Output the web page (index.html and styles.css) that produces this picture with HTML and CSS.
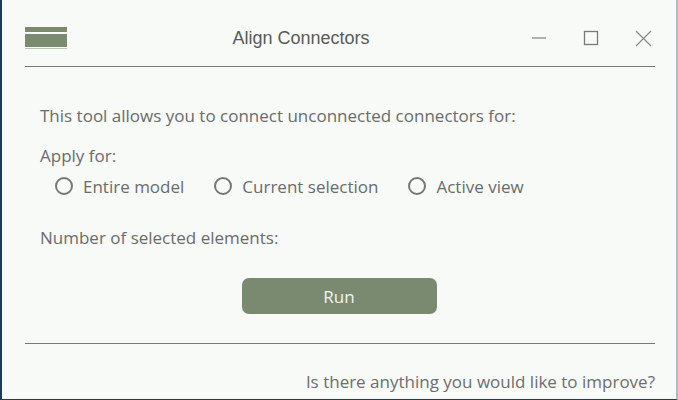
FILE: index.html
```html
<!DOCTYPE html>
<html>
<head>
<meta charset="utf-8">
<link rel="stylesheet" href="styles.css">
</head>
<body>
<div class="window">
  <div class="titlebar">
    <div class="menu-icon"><span class="b1"></span><span class="b2"></span><span class="b3"></span></div>
    <div class="title">Align Connectors</div>
    <div class="controls">
      <svg width="16" height="16" viewBox="0 0 16 16"><line x1="1" y1="8" x2="15" y2="8" stroke="#8a8a8a" stroke-width="1.3"/></svg>
      <svg width="16" height="16" viewBox="0 0 16 16"><rect x="1.5" y="1.5" width="13" height="13" fill="none" stroke="#7a7a7a" stroke-width="1.3"/></svg>
      <svg width="17" height="17" viewBox="0 0 17 17"><path d="M1 1 L16 16 M16 1 L1 16" stroke="#8a8a8a" stroke-width="1.2"/></svg>
    </div>
  </div>
  <div class="rule"></div>
  <div class="content">
    <p class="intro">This tool allows you to connect unconnected connectors for:</p>
    <p class="label">Apply for:</p>
    <div class="radios">
      <label class="radio"><span class="circle"></span>Entire model</label>
      <label class="radio"><span class="circle"></span>Current selection</label>
      <label class="radio"><span class="circle"></span>Active view</label>
    </div>
    <p class="count">Number of selected elements:</p>
    <div class="actions"><button class="run">Run</button></div>
  </div>
  <div class="rule"></div>
  <div class="footer">Is there anything you would like to improve?</div>
</div>
</body>
</html>
```
FILE: styles.css
```css
html, body {
  margin: 0;
  padding: 0;
}
body {
  width: 678px;
  height: 400px;
  overflow: hidden;
  background: #f7faf7;
}
.window {
  box-sizing: border-box;
  width: 678px;
  height: 400px;
  border-left: 2px solid #1f3b5c;
  border-right: 2px solid #a9bccd;
  border-bottom: 1px solid #2b3a44;
  background: #f7faf7;
  display: flex;
  flex-direction: column;
  padding: 0 21px 0 23px;
  font-family: "Open Sans", "Noto Sans", sans-serif;
  color: #6b6b6b;
}
.titlebar {
  height: 66px;
  box-sizing: border-box;
  padding-top: 10px;
  display: flex;
  align-items: center;
}
.menu-icon {
  width: 42px;
  display: flex;
  flex-direction: column;
}
.menu-icon .b1 { height: 5px; background: #7b8b70; }
.menu-icon .b2 { height: 13px; background: #7b8b70; margin-top: 2px; }
.menu-icon .b3 { height: 1px; background: #b9c4b2; margin-top: 1px; }
.title {
  flex: 1;
  text-align: center;
  font-family: "Liberation Sans", Arial, sans-serif;
  font-size: 18px;
  color: #5a5a5a;
  padding-left: 4px;
}
.controls {
  display: flex;
  align-items: center;
  gap: 36px;
  margin-right: 3px;
}
.rule {
  height: 1px;
  background: #7a7a7a;
}
.content {
  flex: 1;
  padding: 38px 0 0 15px;
  font-size: 17px;
  display: flex;
  flex-direction: column;
}
.content p {
  margin: 0;
  line-height: 22px;
}
.label {
  margin-top: 18px !important;
}
.radios {
  display: flex;
  margin-top: 8px;
  padding-left: 15px;
  height: 22px;
  align-items: center;
}
.radio {
  display: flex;
  align-items: center;
  margin-right: 30px;
}
.radio:nth-child(2) { margin-right: 30px; }
.circle {
  box-sizing: border-box;
  width: 18px;
  height: 18px;
  border: 2px solid #777;
  border-radius: 50%;
  margin-right: 10px;
}
.count {
  margin-top: 30px !important;
}
.actions {
  display: flex;
  justify-content: center;
  margin-top: 29px;
  padding-right: 17px;
}
.run {
  width: 195px;
  height: 36px;
  border: none;
  border-radius: 7px;
  background: #7a8a71;
  color: #f2f5f0;
  font-family: "Open Sans", "Noto Sans", sans-serif;
  font-size: 17px;
}
.footer {
  height: 55px;
  display: flex;
  align-items: flex-end;
  justify-content: flex-end;
  padding-bottom: 6px;
  box-sizing: border-box;
  font-size: 17px;
  color: #6e6e6e;
}
```
